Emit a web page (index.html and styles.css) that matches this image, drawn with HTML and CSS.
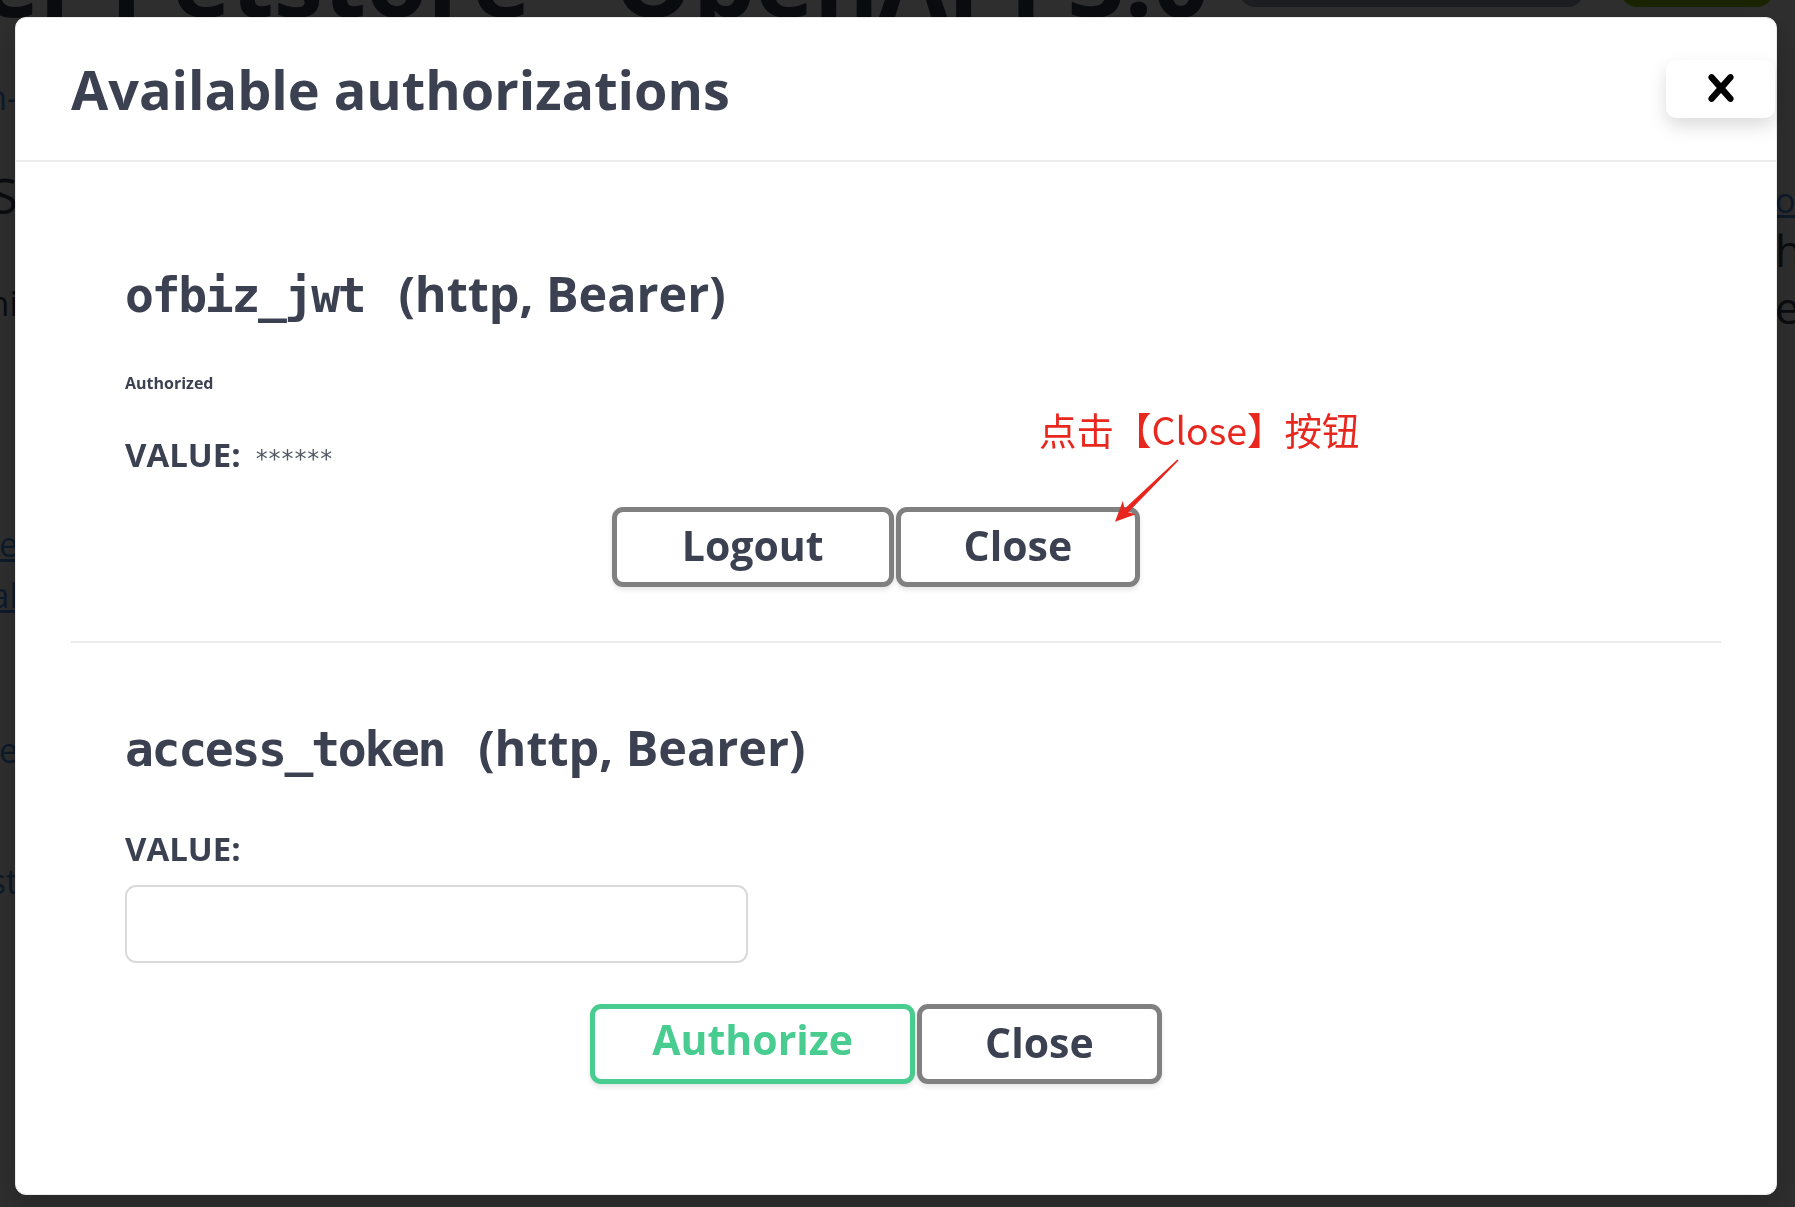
FILE: index.html
```html
<!DOCTYPE html>
<html lang="zh-CN">
<head>
<meta charset="utf-8">
<title>Available authorizations</title>
<link rel="stylesheet" href="styles.css">
</head>
<body>
<div class="page">
  <header class="page-top">
    <h1 class="page-title">Swagger Petstore - OpenAPI 3.0</h1>
    <div class="page-servers"></div>
    <div class="page-authorize"></div>
  </header>
  <div class="page-body">
    <div class="edge edge-left">
      <div class="edge-line l1 link"><span>open-</span></div>
      <div class="edge-line l2"><span>AS</span></div>
      <div class="edge-line l3"><span>hi</span></div>
      <div class="edge-line l4 link under"><span>ore</span></div>
      <div class="edge-line l5 link under"><span>al</span></div>
      <div class="edge-line l6 link"><span>ne</span></div>
      <div class="edge-line l7 link"><span>st</span></div>
    </div>
    <div class="edge edge-right">
      <div class="edge-line r1 link under"><span>o:</span></div>
      <div class="edge-line r2"><span>h</span></div>
      <div class="edge-line r3"><span>e</span></div>
    </div>
  </div>
</div>

<div class="backdrop">
  <div class="modal">
    <div class="modal-header">
      <h3>Available authorizations</h3>
      <button class="close-modal" type="button" aria-label="Close">
        <svg viewBox="0 0 20 20" width="54" height="54" aria-hidden="true">
          <path d="M14.348 14.849c-.469.469-1.229.469-1.697 0L10 11.819l-2.651 3.029c-.469.469-1.229.469-1.697 0-.469-.469-.469-1.229 0-1.697l2.758-3.15-2.759-3.152c-.469-.469-.469-1.228 0-1.697.469-.469 1.228-.469 1.697 0L10 8.183l2.651-3.031c.469-.469 1.228-.469 1.697 0 .469.469.469 1.229 0 1.697l-2.758 3.152 2.758 3.15c.469.469.469 1.229 0 1.698z" fill="#000"/>
        </svg>
      </button>
    </div>
    <div class="modal-content">
      <div class="auth-container">
        <h4><code>ofbiz_jwt</code><span>(http, Bearer)</span></h4>
        <h6>Authorized</h6>
        <div class="value-row"><label>VALUE:</label><span class="masked">******</span></div>
        <div class="auth-btn-wrapper">
          <button class="btn modal-btn logout" type="button">Logout</button>
          <button class="btn modal-btn btn-done" type="button">Close</button>
        </div>
      </div>
      <div class="auth-container last">
        <h4><code>access_token</code><span>(http, Bearer)</span></h4>
        <label class="value-label">VALUE:</label>
        <input type="text" class="value-input">
        <div class="auth-btn-wrapper">
          <button class="btn modal-btn authorize" type="button">Authorize</button>
          <button class="btn modal-btn btn-done" type="button">Close</button>
        </div>
      </div>
    </div>
    <div class="note">点击【Close】按钮</div>
    <svg class="arrow" width="90" height="80" viewBox="0 0 90 80" aria-hidden="true">
      <polygon points="78.6,10.6 28.2,62.3 35.8,64.3 15,71.7 22.8,51.1 24.6,58.7 77.4,9.4" fill="#e8261e"/>
    </svg>
  </div>
</div>
</body>
</html>
```

FILE: styles.css
```css
html, body {
  margin: 0;
  padding: 0;
}

body {
  width: 1795px;
  height: 1207px;
  overflow: hidden;
  background: #ffffff;
  font-family: "Open Sans", "Noto Sans", "Noto Sans CJK SC", sans-serif;
  color: #3b4151;
}

/* ---------- page underneath the dialog ---------- */
.page-top {
  display: flex;
  align-items: flex-end;
  height: 28px;
}

.page-title {
  margin: 0 0 0 -330px;
  font-size: 99px;
  line-height: 98px;
  font-weight: 700;
  white-space: nowrap;
  color: #3b4151;
  flex: none;
}

.page-servers {
  flex: none;
  width: 345px;
  height: 70px;
  margin: 0 0 21px 30px;
  border-radius: 16px;
  background: #9da2b0;
}

.page-authorize {
  flex: none;
  width: 152px;
  height: 70px;
  margin: 0 0 21px 37px;
  border-radius: 16px;
  background: #89bf04;
}

.page-body {
  display: flex;
  justify-content: space-between;
}

.edge {
  display: flex;
  flex-direction: column;
  width: 60px;
}

.edge-line {
  display: flex;
  height: 40px;
  line-height: 40px;
  font-size: 34px;
  white-space: nowrap;
  color: #3b4151;
}

.edge-left .edge-line {
  justify-content: flex-end;
}

.edge-left {
  margin-left: -42px;
}

.edge-right {
  margin-right: -40px;
}

.edge-line.link {
  color: #4990e2;
}

.edge-line.under span {
  text-decoration: underline;
}

.l1 { margin-top: 49px; }
.l2 { margin-top: 58px; font-size: 50px; }
.l3 { margin-top: 68px; }
.l4 { margin-top: 201px; }
.l5 { margin-top: 11px; }
.l6 { margin-top: 115px; }
.l7 { margin-top: 91px; }
.r1 { margin-top: 152px; }
.r2 { margin-top: 10px; font-size: 44px; }
.r3 { margin-top: 17px; font-size: 44px; }

/* ---------- dialog ---------- */
.backdrop {
  position: fixed;
  inset: 0;
  background: rgba(0, 0, 0, 0.82);
  display: flex;
  align-items: flex-start;
  padding: 17px 0 0 15px;
}

.modal {
  position: relative;
  box-sizing: border-box;
  width: 1762px;
  background: #ffffff;
  border: 1px solid #ebebeb;
  border-radius: 11px;
  box-shadow: 0 10px 30px rgba(0, 0, 0, 0.2);
}

.modal-header {
  display: flex;
  align-items: center;
  height: 142px;
  border-bottom: 2px solid #ececec;
}

.modal-header h3 {
  flex: 1;
  margin: 0;
  padding: 0 0 0 55px;
  font-size: 54px;
  line-height: 75px;
  font-weight: 700;
  color: #3b4151;
}

.close-modal {
  display: flex;
  align-items: center;
  justify-content: center;
  width: 109px;
  height: 58px;
  margin: 0 1px 0 0;
  padding: 0;
  border: none;
  border-radius: 10px;
  background: #ffffff;
  box-shadow: 0 8px 18px rgba(0, 0, 0, 0.14);
}

.close-modal svg {
  margin-top: -3px;
}

.modal-content {
  padding: 54px 55px 56px;
}

.auth-container {
  padding: 27px 54px;
  margin: 0 0 27px;
  border-bottom: 2px solid #ececec;
}

.auth-container.last {
  margin: 0;
  border-bottom: 0;
}

.auth-container h4 {
  display: flex;
  align-items: baseline;
  gap: 34px;
  margin: 14px 0 41px;
  font-size: 48.5px;
  line-height: 72px;
  font-weight: 700;
  color: #3b4151;
}

.auth-container h4 code {
  font-family: "DejaVu Sans Mono", "Liberation Mono", monospace;
  font-size: 48px;
  line-height: 72px;
  font-weight: 700;
  letter-spacing: -2.3px;
}

.auth-container h6 {
  margin: 0 0 38px;
  font-size: 16px;
  line-height: 22px;
  font-weight: 700;
  color: #3b4151;
}

.value-row {
  margin: 0 0 3px;
  font-size: 33px;
  line-height: 45px;
  font-weight: 700;
}

.masked {
  display: inline-block;
  margin-left: 15px;
  vertical-align: 0;
  font-family: "DejaVu Sans", sans-serif;
  font-size: 24px;
  line-height: 24px;
  font-weight: 400;
  letter-spacing: 0.9px;
  color: #555a66;
}

.value-label {
  display: block;
  margin: 0 0 14px;
  font-size: 33px;
  line-height: 45px;
  font-weight: 700;
}

.value-input {
  display: block;
  box-sizing: border-box;
  width: 623px;
  height: 78px;
  margin: 0 0 14px;
  padding: 8px 27px;
  border: 2px solid #dadada;
  border-radius: 11px;
  background: #ffffff;
  font-size: 33px;
}

.auth-btn-wrapper {
  display: flex;
  justify-content: center;
  gap: 2px;
  padding: 27px 0;
}

.btn {
  box-sizing: border-box;
  height: 80px;
  padding: 11px 63px 15px;
  border: 5px solid #808080;
  border-radius: 11px;
  background: #ffffff;
  box-shadow: 0 3px 5px rgba(0, 0, 0, 0.1);
  color: #3b4151;
  font-family: "Open Sans", "Noto Sans", sans-serif;
  font-size: 41px;
  line-height: 44px;
  font-weight: 700;
}

.btn.logout {
  padding-left: 65px;
  padding-right: 65px;
}

.btn.btn-done {
  margin-right: 40px;
}

.btn.authorize {
  padding: 8px 57px 18px;
  border-color: #49cc90;
  color: #49cc90;
}

/* ---------- annotation over the screenshot ---------- */
.note {
  position: absolute;
  left: 1023px;
  top: 391px;
  font-family: "Noto Sans CJK SC", "Noto Sans", sans-serif;
  font-size: 37.5px;
  line-height: 40px;
  font-weight: 400;
  color: #e8281f;
  white-space: nowrap;
}

.arrow {
  position: absolute;
  left: 1084px;
  top: 432px;
}
```
